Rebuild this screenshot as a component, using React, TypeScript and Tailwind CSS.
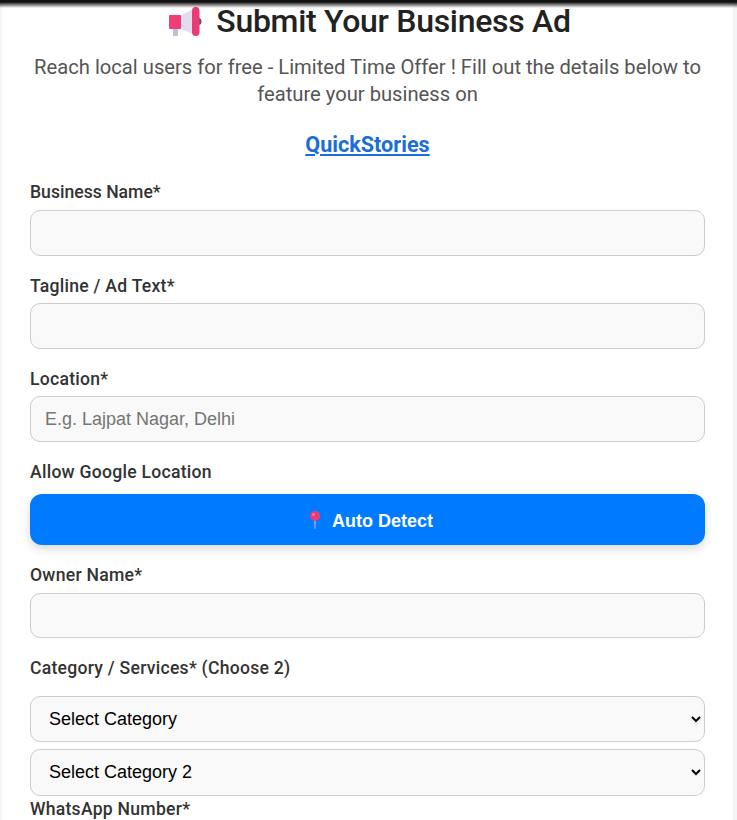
import React from 'react';

const labelClass = "block text-[17.6px] leading-[21px] font-medium tracking-[0.25px] text-[#333]";
const inputClass = "block w-full rounded-[10px] border border-[#ccc] bg-[#f9f9f9] px-[14px] text-[18px] text-black placeholder:text-[#757575] outline-none";
const selectClass = "block w-full rounded-[10px] border border-[#ccc] bg-[#f9f9f9] px-[14px] text-[18px] text-black outline-none font-['Liberation_Sans',sans-serif]";

const Megaphone = () => (
  <svg width="34" height="31" viewBox="0 0 34 31" className="shrink-0">
    <path d="M5 23h5v7H5z" fill="#c4bdd6" />
    <path d="M13 9.500 L25 3 V28 L13 23z" fill="#e3dcee" />
    <rect x="1" y="9" width="12" height="14" rx="1" fill="#ef3d78" />
    <path d="M31 12c1.500 0 2.500 1.500 2.500 3.500S32.500 19 31 19z" fill="#5a5a68" />
    <rect x="24" y="1" width="7.500" height="29" rx="3.700" fill="#ea3b76" />
  </svg>
);

const Pin = () => (
  <svg width="10" height="18" viewBox="0 0 10 18" className="shrink-0 -mt-[3px]">
    <path d="M4.300 9h1.400l-.3 9h-.8z" fill="#a9c4e8" />
    <circle cx="5" cy="5" r="5" fill="#ee3a74" />
    <circle cx="3.500" cy="3.500" r="1.300" fill="#f98bb0" />
  </svg>
);

const App: React.FC = () => {
  return (
    <div className="relative h-[820px] overflow-hidden bg-[#f4f5f6] font-['Liberation_Sans',sans-serif]">
      <div className="absolute inset-x-0 top-0 h-[8px] bg-gradient-to-b from-[#111] from-25% to-transparent" />
      <div className="ml-[2px] mr-[4px] h-[820px] overflow-hidden bg-white pl-[28px] pr-[28px] pt-[4px] font-['Roboto',sans-serif]">
        <h1 className="flex items-center justify-center gap-[14px] pl-[4px] text-[32px] leading-[34px] font-medium tracking-[-0.3px] text-[#222]">
          <Megaphone />
          <span>Submit Your Business Ad</span>
        </h1>
        <p className="mt-[16px] text-center text-[20.2px] leading-[27px] text-[#555]">
          Reach local users for free - Limited Time Offer ! Fill out the details below to feature your business on
        </p>
        <p className="mt-[23px] text-center">
          <a href="#" className="text-[21.600px] leading-[28px] font-bold text-[#1a6ed8] underline">QuickStories</a>
        </p>
        <form className="mt-[23px]">
          <label className={`${labelClass} tracking-normal`}>Business Name*</label>
          <input className={`${inputClass} mt-[7px] h-[46px]`} />
          <label className={`${labelClass} mt-[20px]`}>Tagline / Ad Text*</label>
          <input className={`${inputClass} mt-[6px] h-[46px]`} />
          <label className={`${labelClass} mt-[20px]`}>Location*</label>
          <input className={`${inputClass} mt-[6px] h-[46px] font-['Liberation_Sans',sans-serif]`} placeholder="E.g. Lajpat Nagar, Delhi" />
          <label className={`${labelClass} mt-[20px]`}>Allow Google Location</label>
          <button type="button" className="mt-[11px] flex h-[51px] w-full items-center justify-center gap-[12px] rounded-[12px] bg-[#007bff] pl-[8px] pt-[4px] text-[18px] font-bold text-white shadow-[0_4px_10px_rgba(0,0,0,0.15)] font-['Liberation_Sans',sans-serif]">
            <Pin />
            Auto Detect
          </button>
          <label className={`${labelClass} mt-[20px]`}>Owner Name*</label>
          <input className={`${inputClass} mt-[7px] h-[45px]`} />
          <label className={`${labelClass} mt-[20px]`}>Category / Services* (Choose 2)</label>
          <select className={`${selectClass} mt-[17px] h-[46px]`}><option>Select Category</option></select>
          <select className={`${selectClass} mt-[7px] h-[47px] pb-[2px]`}><option>Select Category 2</option></select>
          <label className={`${labelClass} mt-[3px]`}>WhatsApp Number*</label>
        </form>
      </div>
    </div>
  );
};

export default App;
